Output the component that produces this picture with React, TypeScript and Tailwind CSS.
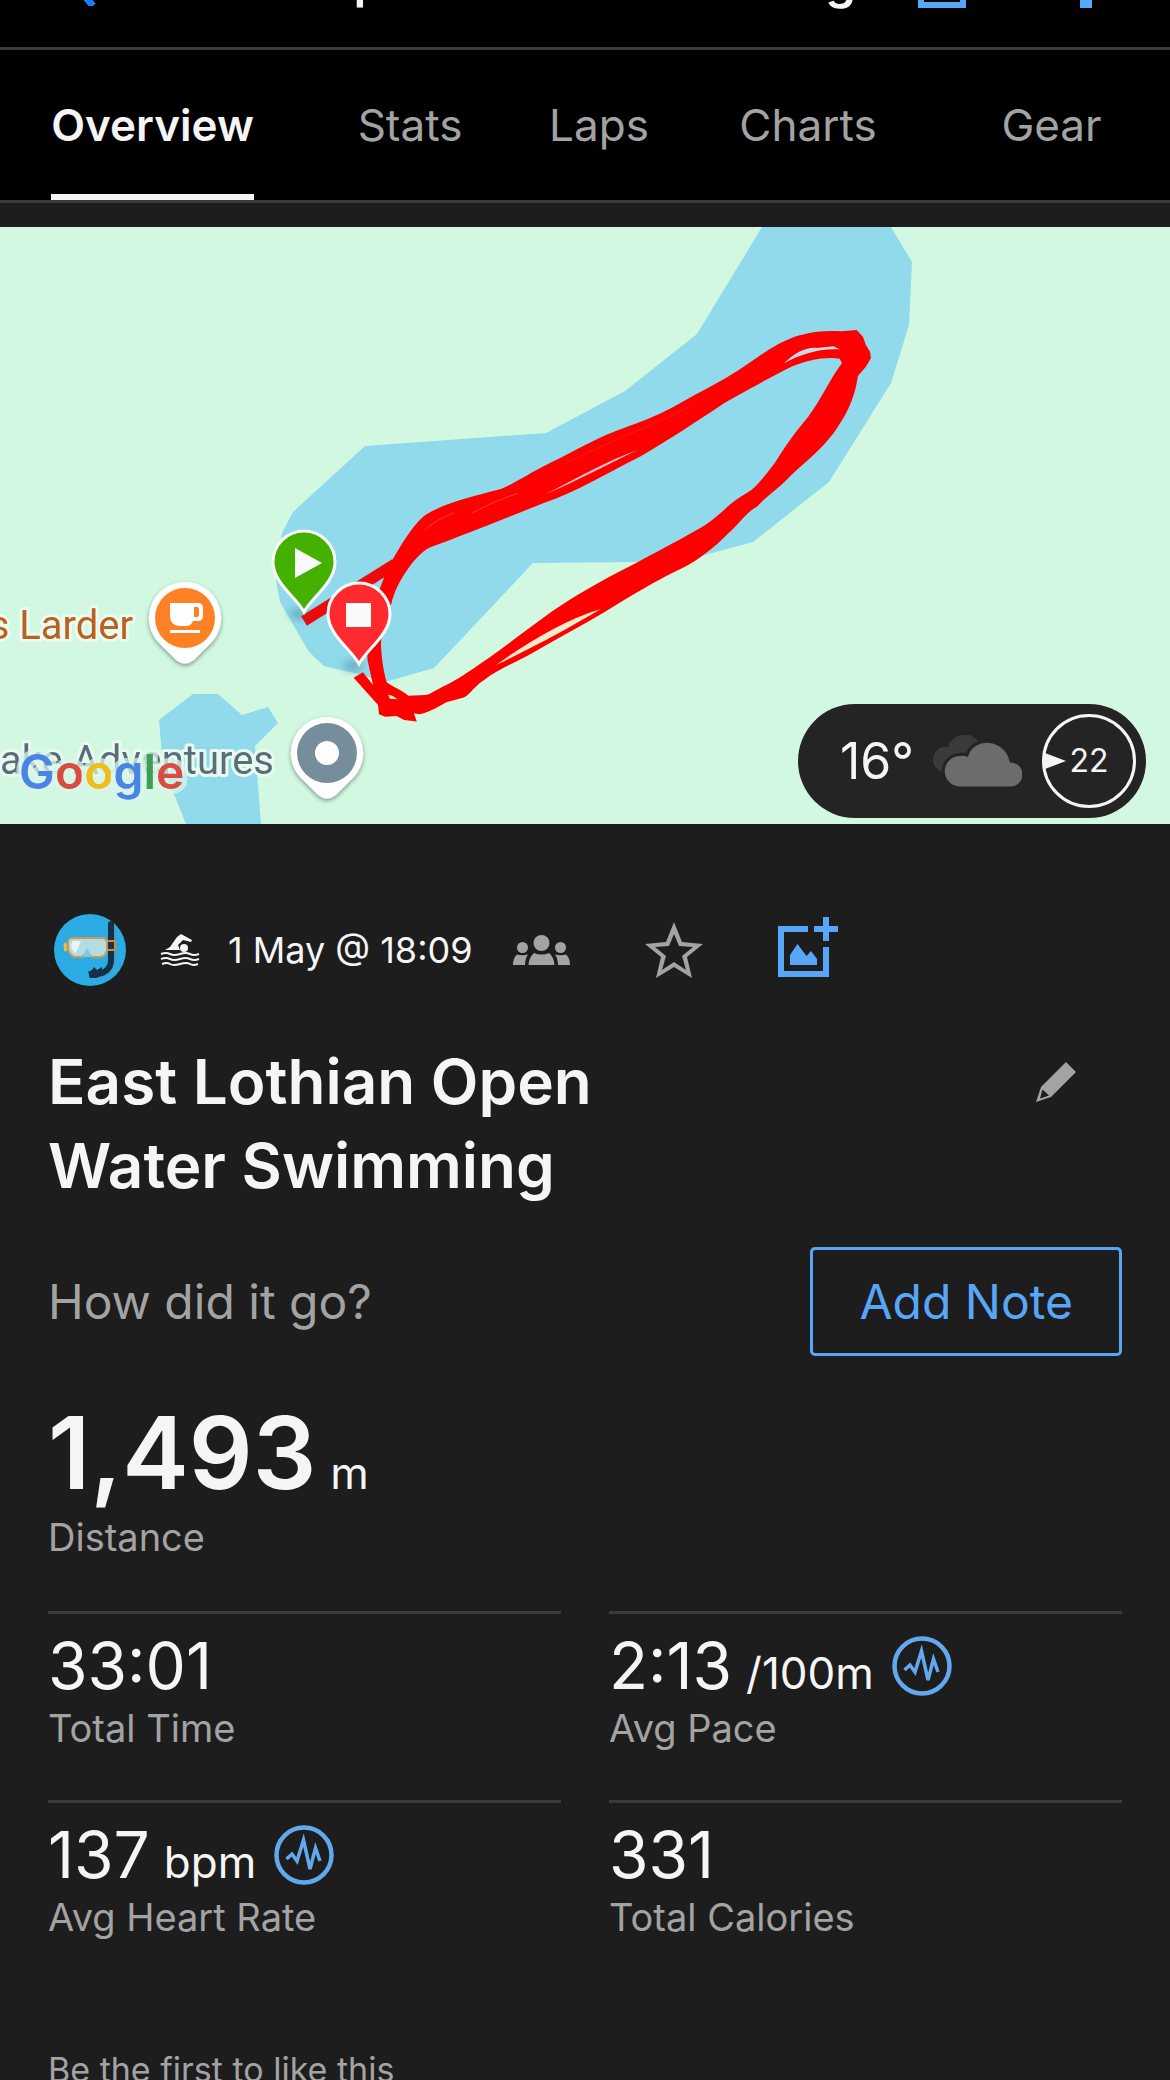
import { useState } from 'react';

interface Metric {
    label: string;
    value: string;
    unit?: string;
    live?: boolean;
}

const tabs = ['Overview', 'Stats', 'Laps', 'Charts', 'Gear'];

const metrics: Metric[] = [
    { label: 'Total Time', value: '33:01' },
    { label: 'Avg Pace', value: '2:13', unit: '/100m', live: true },
    { label: 'Avg Heart Rate', value: '137', unit: 'bpm', live: true },
    { label: 'Total Calories', value: '331' },
];

function Header() {
    return (
        <header className="h-[50px] overflow-hidden border-b-[3px] border-[#3b3b3b] bg-black">
            <div className="-mt-14 flex h-[72px] items-center pr-[66px] pl-[68px]">
                <button type="button" aria-label="Back">
                    <svg className="h-[52px] w-7" viewBox="0 0 28 52" fill="none" stroke="#1a7cf8" strokeWidth="7">
                        <path d="M25 2L5 28l20 24" />
                    </svg>
                </button>
                <h1 className="flex-1 text-right text-[49px] leading-none font-semibold text-[#f5f5f5]">Open Water Swimming</h1>
                <button type="button" aria-label="Share" className="ml-[62px]">
                    <svg className="h-14 w-12" viewBox="0 0 48 56" fill="none" stroke="#58a6f8" strokeWidth="6">
                        <path d="M14 17H3v36h42V17H34M24 38V4m-10 10L24 4l10 10" />
                    </svg>
                </button>
                <button type="button" aria-label="More" className="ml-[102px]">
                    <svg className="h-14 w-9" viewBox="0 0 36 56" fill="#58a6f8">
                        <path d="M12 0h12v12H12zM12 22h12v12H12zM12 44h12v12H12z" />
                    </svg>
                </button>
            </div>
        </header>
    );
}

function LakeMap() {
    return (
        <svg className="block h-auto w-full" viewBox="0 227 1170 597" role="img" aria-label="Route map">
            <defs>
                <filter id="drop" x="-30%" y="-30%" width="160%" height="160%">
                    <feDropShadow dx="0" dy="2" stdDeviation="2" floodColor="#000" floodOpacity="0.4" />
                </filter>
                <filter id="soft" x="-50%" y="-50%" width="200%" height="200%">
                    <feGaussianBlur stdDeviation="4" />
                </filter>
                <path id="pin" d="M0 0C-7-14-31-29-31-50A31 31 0 0 1 31-50C31-29 7-14 0 0Z" />
                <path id="poi" d="M0-36A36 36 0 0 1 27 24L9 42Q0 49-9 42L-27 24A36 36 0 0 1 0-36Z" />
            </defs>
            <rect y="227" width="1170" height="597" fill="#d2f8e1" />
            <path
                fill="#90daec"
                d="M762 227L697 334L625 391L546 433L365 446L293 512L282 533L276 580L280 602L309 652L324 666L358 674L385 682L434 668L533 563L640 562L701 556L753 542L829 482L891 383L909 325L912 262L891 227Z"
            />
            <path fill="#90daec" d="M193 694H218L242 715L268 707L278 723L255 746L261 824H186L163 767L159 720Z" />

            <path d="M304 621L395 564" stroke="#ee0a0a" strokeWidth="11" />
            <g transform="translate(240 300) scale(0.4209 0.3333)">
                <path
                    fill="#ff0000"
                    fillRule="evenodd"
                    d="M355 795C385 730 405 685 435 650C480 610 550 590 620 567C650 552 680 525 740 487C800 450 850 410 920 380C960 362 1000 345 1080 285C1130 252 1170 225 1220 180C1270 135 1310 110 1340 103C1370 92 1400 92 1430 94L1465 90L1480 110L1487 135L1497 155L1499 175L1487 200L1468 228C1462 280 1450 330 1410 400C1380 450 1340 490 1310 525C1280 565 1250 590 1228 620C1200 640 1180 680 1160 700C1130 740 1090 780 1050 805C1000 835 960 865 900 910C830 965 770 1005 700 1055C650 1090 610 1110 580 1140C550 1165 545 1190 525 1195L490 1207C465 1225 445 1240 425 1243L413 1240L420 1265L390 1260L372 1248L345 1250L330 1243L328 1215L270 1133L292 1117L316 1155L303 1080L300 1000L328 880L340 840Z
                    M1430 190C1400 240 1385 290 1350 350C1310 410 1290 450 1270 490C1240 540 1225 560 1215 570C1190 590 1170 605 1150 630C1120 665 1100 680 1085 690C1030 730 990 755 940 790C860 840 800 885 740 935C690 980 640 1030 590 1075C560 1100 530 1130 490 1155C465 1170 450 1185 440 1185L400 1187C380 1165 360 1160 348 1145C340 1110 335 1060 335 1030L340 960L360 910C365 880 380 840 400 805C420 770 440 745 460 738C540 700 620 660 720 610C800 575 870 520 950 470C1020 420 1090 360 1150 310C1220 260 1270 225 1310 200C1350 180 1390 170 1425 176Z"
                />
                <path fill="#c6dbe8" d="M1292 190C1320 155 1350 140 1370 144L1410 139L1425 148C1370 145 1330 165 1292 190Z" />
                <path fill="#e9c4cc" d="M727 582C800 534 880 478 945 450C880 489 800 543 727 582Z" />
                <path fill="#f3ecc9" d="M608 1095C680 1030 770 960 857 927C780 985 700 1040 608 1095Z" />
                <path fill="#e8f3d0" d="M352 1184L362 1187L374 1198L356 1196Z" />
                <path stroke="#f5555c" strokeWidth="2" fill="none" d="M550 640Q610 600 660 580M440 690Q470 655 510 638" />
                <path stroke="#f82020" strokeWidth="2" fill="none" d="M770 495C860 430 1000 370 1080 310" />
            </g>

            <ellipse cx="299" cy="614" rx="10" ry="5" fill="#2b5b6b" opacity="0.4" filter="url(#soft)" />
            <ellipse cx="353" cy="666" rx="10" ry="5" fill="#2b5b6b" opacity="0.4" filter="url(#soft)" />
            <g stroke="#fafafa" strokeWidth="3">
                <use href="#pin" x="304" y="612" fill="#44b000" />
                <use href="#pin" x="359" y="664" fill="#ff2a2e" />
            </g>
            <path fill="#fafafa" d="M295 548L322 563L295 578Z" />
            <path fill="#fafafa" d="M346 603h25v24h-25z" />

            <g filter="url(#drop)" fill="#ffffff">
                <use href="#poi" x="185" y="618" />
                <use href="#poi" x="327" y="753" />
            </g>
            <circle cx="185" cy="618" r="30" fill="#ff8126" />
            <path
                fill="#ffffff"
                fillRule="evenodd"
                d="M170 603H198Q203 603 203 608V616Q203 621 198 621H193Q191 626 186 626H179Q170 625 170 616ZM194 607V617H197Q199 617 199 615V609Q199 607 197 607ZM170 630H200V633H170Z"
            />
            <circle cx="327" cy="753" r="30" fill="#768e9b" />
            <circle cx="327" cy="753" r="12" fill="#ffffff" />

            <g className="font-[Roboto,sans-serif] text-[40px]" textAnchor="end" stroke="#e9fbf1" strokeWidth="6" strokeLinejoin="round" paintOrder="stroke">
                <text x="133" y="639" fill="#bd601f">s Larder</text>
                <text x="274" y="774" fill="#596e7a">ake Adventures</text>
            </g>
            <text
                className="font-[Inter,sans-serif] text-[48px] font-semibold"
                x="19"
                y="789"
                stroke="#d9f6e8"
                strokeOpacity="0.75"
                strokeWidth="10"
                strokeLinejoin="round"
                paintOrder="stroke"
            >
                <tspan fill="#4a84e4">G</tspan>
                <tspan fill="#d94b43">o</tspan>
                <tspan fill="#f0bd1c">o</tspan>
                <tspan fill="#4a84e4">g</tspan>
                <tspan fill="#3c9f57">l</tspan>
                <tspan fill="#d94b43">e</tspan>
            </text>
        </svg>
    );
}

function Weather() {
    return (
        <div className="absolute right-6 bottom-[6px] flex h-[114px] items-center rounded-full bg-[#242424] pr-[10px] pl-[42px] text-[#f5f5f5]">
            <span className="text-[50px] leading-none">16°</span>
            <svg className="ml-[14px] h-[52px] w-[94px]" viewBox="0 0 94 52">
                <path fill="#3a3a3a" d="M14 37A13 13 0 0 1 15 12H20C24-3 46-4 51 8L30 37Z" />
                <path
                    fill="#6c6c6c"
                    stroke="#242424"
                    strokeWidth="3"
                    d="M32 53A16 16 0 0 1 32 19.500Q36 19 39 20C45 0 78 2 83 26A13.500 13.500 0 0 1 82 53Z"
                />
            </svg>
            <div className="relative ml-5 flex h-[94px] w-[94px] items-center justify-center rounded-full border-[3px] border-[#f5f5f5]">
                <svg className="absolute left-0 h-4 w-[21px]" viewBox="0 0 21 16" fill="#f5f5f5">
                    <path d="M0 0l21 8-21 8z" />
                </svg>
                <span className="text-[32px] leading-none">22</span>
            </div>
        </div>
    );
}

function Avatar() {
    return (
        <svg className="size-[72px]" viewBox="0 0 72 72" role="img" aria-label="Profile">
            <circle cx="36" cy="36" r="36" fill="#2aabe3" />
            <path d="M57 10V46Q57 60 38 61" fill="none" stroke="#12304a" strokeWidth="6" strokeLinecap="round" />
            <path d="M61 11V47Q59 62 42 64" fill="none" stroke="#6c8792" strokeWidth="1" />
            <path d="M34 58l4-2 2-3 3 3 5-3v8l-6 3q-6 0-8-6z" fill="#12304a" />
            <path d="M51 27h10v9H51z" fill="#17364d" stroke="#d58b35" strokeWidth="2" />
            <path d="M12 29q-2 3 0 8" fill="none" stroke="#e9c23d" strokeWidth="3" />
            <path
                d="M18 24H48Q53 24 53 29V36Q52 43 46 43H38Q36 42 33 37Q30 43 27 43H20Q15 41 14 34V28Q15 24 18 24Z"
                fill="#b5dce0"
                stroke="#c99a5b"
                strokeWidth="2"
            />
            <path d="M19 27h8l-5 12q-5-2-5-8z" fill="#e6f6f7" />
            <path d="M33 33l4 10h-8z" fill="#7fc9e4" />
        </svg>
    );
}

function SwimIcon() {
    return (
        <svg className="h-8 w-10" viewBox="0 0 40 32" fill="none" stroke="#f5f5f5" strokeWidth="2">
            <path d="M5 16L10 13L17 3L21 0L32 6L31 8L23 6L18 11L20 16Z" fill="#f5f5f5" stroke="none" />
            <circle cx="24" cy="14" r="4" fill="#f5f5f5" stroke="none" />
            <path d="M1 20q5-2 9 0t10 0t10 0t9 0" />
            <path d="M1 25q5-2 9 0t10 0t10 0t9 0" />
            <path d="M2 30q5-2 8 0t10 0t10 0t8 0" />
        </svg>
    );
}

function LiveIcon() {
    return (
        <svg className="size-[60px]" viewBox="0 0 60 60" fill="none" stroke="#62a8ef">
            <circle cx="30" cy="30" r="27.500" strokeWidth="4.500" />
            <path d="M12.500 34L18 29L23 36L29.500 15L36 44L41.500 23L46 36" strokeWidth="3.500" />
        </svg>
    );
}

function MetricCell({ metric }: { metric: Metric }) {
    return (
        <div className="border-t-[3px] border-[#3b3b3b] pt-5 pb-12">
            <div className="flex h-16 items-center">
                <p className="text-[64px] leading-[64px] whitespace-nowrap">
                    {metric.value}
                    {metric.unit && <span className="ml-[14px] text-[44px] leading-none">{metric.unit}</span>}
                </p>
                {metric.live && (
                    <button type="button" aria-label={`${metric.label} details`} className="ml-[18px]">
                        <LiveIcon />
                    </button>
                )}
            </div>
            <p className="mt-[6px] text-[38px] leading-[48px] text-[#a3a3a3]">{metric.label}</p>
        </div>
    );
}

export default function App() {
    const [activeTab, setActiveTab] = useState('Overview');

    return (
        <div className="min-h-screen bg-[#1d1d1d] font-[Inter,'Liberation_Sans',sans-serif] text-[#f5f5f5]">
            <Header />
            <nav className="grid h-[153px] grid-cols-[305fr_210fr_168fr_250fr_237fr] justify-items-center border-b-[3px] border-[#3b3b3b] bg-black text-[44px]">
                {tabs.map((tab) => (
                    <button
                        key={tab}
                        type="button"
                        onClick={() => setActiveTab(tab)}
                        className={
                            tab === activeTab
                                ? 'border-b-[6px] border-[#f5f5f5] pt-[6px] font-semibold'
                                : 'border-b-[6px] border-transparent pt-[6px] text-[#a3a3a3]'
                        }
                    >
                        {tab}
                    </button>
                ))}
            </nav>

            <div className="relative mt-6">
                <LakeMap />
                <Weather />
            </div>

            <main className="px-12">
                <div className="mt-[90px] flex h-[72px] items-center pl-[6px]">
                    <Avatar />
                    <span className="ml-[34px]">
                        <SwimIcon />
                    </span>
                    <span className="ml-7 text-[36px]">1 May @ 18:09</span>
                    <svg className="ml-10 h-[30px] w-[57px]" viewBox="0 0 57 30" fill="#a3a3a3">
                        <circle cx="28.500" cy="8" r="8" />
                        <circle cx="9.500" cy="12.500" r="5.500" />
                        <circle cx="47.500" cy="12.500" r="5.500" />
                        <path d="M15.500 30Q16 22 21 18Q28.500 21 36 18Q41 22 41.500 30ZM0 30Q0 23 4 19.500Q9 21 15 19.500Q12 24 12 30ZM57 30Q57 23 53 19.500Q48 21 42 19.500Q45 24 45 30Z" />
                    </svg>
                    <button type="button" aria-label="Favourite" className="ml-[74px]">
                        <svg className="h-14 w-[60px]" viewBox="0 0 60 56" fill="#a3a3a3" fillRule="evenodd">
                            <path d="M30 0L38 20L59 22L43 35L48 56L30 45L12 56L17 35L1 22L22 20ZM30 12L35 24L49 25L38 34L42 48L30 40L18 48L22 34L11 25L25 24Z" />
                        </svg>
                    </button>
                    <button type="button" aria-label="Add photo" className="ml-[74px]">
                        <svg className="mb-[6px] size-[60px]" viewBox="0 0 60 60" fill="#58a6f8">
                            <path d="M30 12H3V57H48V30" fill="none" stroke="#58a6f8" strokeWidth="6" />
                            <path d="M12 38L19.500 27L28.500 39L33 34L39 42V48H12Z" />
                            <path d="M45 0h6v9h9v6h-9v9h-6v-9h-9V9h9z" />
                        </svg>
                    </button>
                </div>

                <div className="mt-[54px] flex items-start justify-between">
                    <h2 className="w-[640px] text-[62px] leading-[84px] font-semibold">
                        East Lothian Open
                        <br />
                        Water Swimming
                    </h2>
                    <button type="button" aria-label="Edit name" className="mt-[22px] mr-[46px]">
                        <svg className="size-10" viewBox="0 0 40 40" fill="#a3a3a3" fillRule="evenodd">
                            <path d="M30 0L40 10L15 35L0 40L5 25ZM6.500 27.500L4 36.500L13 33.500Z" />
                        </svg>
                    </button>
                </div>

                <div className="mt-[39px] flex items-center justify-between text-[48px] leading-none">
                    <p className="text-[#a3a3a3]">How did it go?</p>
                    <button type="button" className="h-[109px] rounded-[5px] border-[3px] border-[#58a6f8] px-[46px] text-[#58a6f8]">
                        Add Note
                    </button>
                </div>

                <p className="mt-[47px] text-[100px] leading-[100px] font-semibold">
                    1,493
                    <span className="ml-[14px] text-[44px] leading-none font-normal">m</span>
                </p>
                <p className="mt-[10px] text-[38px] leading-[48px] text-[#a3a3a3]">Distance</p>

                <div className="mt-[50px] grid grid-cols-2 gap-x-12">
                    {metrics.map((metric) => (
                        <MetricCell key={metric.label} metric={metric} />
                    ))}
                </div>
            </main>

            <footer className="mt-[57px] h-[34px] overflow-hidden px-12 text-[34px] leading-[48px] text-[#a3a3a3]">
                Be the first to like this
            </footer>
        </div>
    );
}
